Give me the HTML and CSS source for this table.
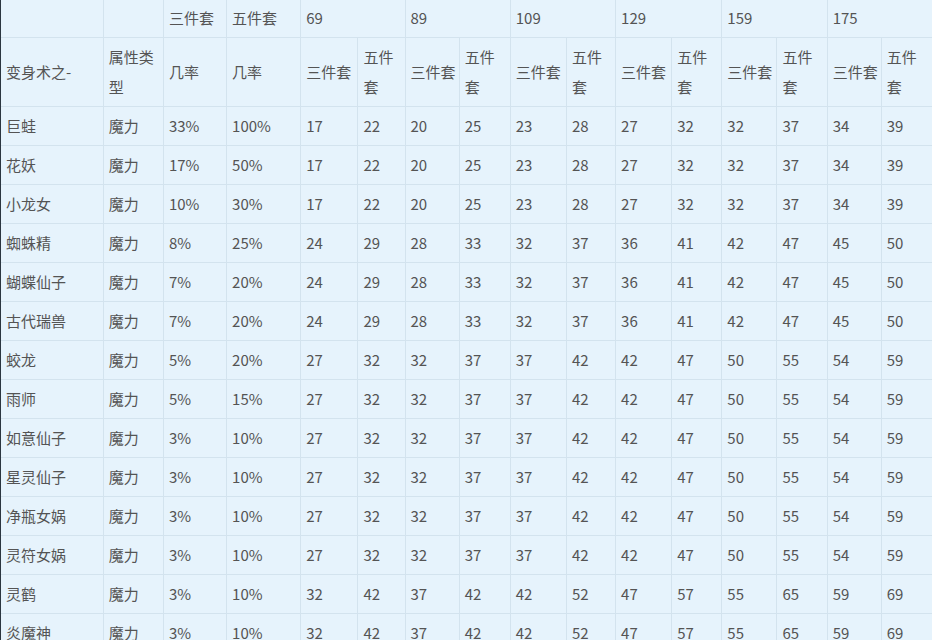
FILE: index.html
```html
<!DOCTYPE html>
<html lang="zh-CN">
<head>
<meta charset="utf-8">
<title>变身术</title>
<link rel="stylesheet" href="styles.css">
</head>
<body>
<div class="frame">
<table class="grid">
<colgroup>
<col class="w103"><col class="w60"><col class="w63"><col class="w74">
<col class="w57"><col class="w47"><col class="w54"><col class="w51">
<col class="w56"><col class="w49"><col class="w56"><col class="w50">
<col class="w55"><col class="w50"><col class="w54"><col class="w53">
</colgroup>
<thead>
<tr><td></td><td></td><td>三件套</td><td>五件套</td><td colspan="2">69</td><td colspan="2">89</td><td colspan="2">109</td><td colspan="2">129</td><td colspan="2">159</td><td colspan="2">175</td></tr>
<tr><td>变身术之-</td><td>属性类型</td><td>几率</td><td>几率</td><td>三件套</td><td class="wrap">五件套</td><td>三件套</td><td class="wrap">五件套</td><td>三件套</td><td class="wrap">五件套</td><td>三件套</td><td class="wrap">五件套</td><td>三件套</td><td class="wrap">五件套</td><td>三件套</td><td class="wrap">五件套</td></tr>
</thead>
<tbody>
<tr><td>巨蛙</td><td>魔力</td><td>33%</td><td>100%</td><td>17</td><td>22</td><td>20</td><td>25</td><td>23</td><td>28</td><td>27</td><td>32</td><td>32</td><td>37</td><td>34</td><td>39</td></tr>
<tr><td>花妖</td><td>魔力</td><td>17%</td><td>50%</td><td>17</td><td>22</td><td>20</td><td>25</td><td>23</td><td>28</td><td>27</td><td>32</td><td>32</td><td>37</td><td>34</td><td>39</td></tr>
<tr><td>小龙女</td><td>魔力</td><td>10%</td><td>30%</td><td>17</td><td>22</td><td>20</td><td>25</td><td>23</td><td>28</td><td>27</td><td>32</td><td>32</td><td>37</td><td>34</td><td>39</td></tr>
<tr><td>蜘蛛精</td><td>魔力</td><td>8%</td><td>25%</td><td>24</td><td>29</td><td>28</td><td>33</td><td>32</td><td>37</td><td>36</td><td>41</td><td>42</td><td>47</td><td>45</td><td>50</td></tr>
<tr><td>蝴蝶仙子</td><td>魔力</td><td>7%</td><td>20%</td><td>24</td><td>29</td><td>28</td><td>33</td><td>32</td><td>37</td><td>36</td><td>41</td><td>42</td><td>47</td><td>45</td><td>50</td></tr>
<tr><td>古代瑞兽</td><td>魔力</td><td>7%</td><td>20%</td><td>24</td><td>29</td><td>28</td><td>33</td><td>32</td><td>37</td><td>36</td><td>41</td><td>42</td><td>47</td><td>45</td><td>50</td></tr>
<tr><td>蛟龙</td><td>魔力</td><td>5%</td><td>20%</td><td>27</td><td>32</td><td>32</td><td>37</td><td>37</td><td>42</td><td>42</td><td>47</td><td>50</td><td>55</td><td>54</td><td>59</td></tr>
<tr><td>雨师</td><td>魔力</td><td>5%</td><td>15%</td><td>27</td><td>32</td><td>32</td><td>37</td><td>37</td><td>42</td><td>42</td><td>47</td><td>50</td><td>55</td><td>54</td><td>59</td></tr>
<tr><td>如意仙子</td><td>魔力</td><td>3%</td><td>10%</td><td>27</td><td>32</td><td>32</td><td>37</td><td>37</td><td>42</td><td>42</td><td>47</td><td>50</td><td>55</td><td>54</td><td>59</td></tr>
<tr><td>星灵仙子</td><td>魔力</td><td>3%</td><td>10%</td><td>27</td><td>32</td><td>32</td><td>37</td><td>37</td><td>42</td><td>42</td><td>47</td><td>50</td><td>55</td><td>54</td><td>59</td></tr>
<tr><td>净瓶女娲</td><td>魔力</td><td>3%</td><td>10%</td><td>27</td><td>32</td><td>32</td><td>37</td><td>37</td><td>42</td><td>42</td><td>47</td><td>50</td><td>55</td><td>54</td><td>59</td></tr>
<tr><td>灵符女娲</td><td>魔力</td><td>3%</td><td>10%</td><td>27</td><td>32</td><td>32</td><td>37</td><td>37</td><td>42</td><td>42</td><td>47</td><td>50</td><td>55</td><td>54</td><td>59</td></tr>
<tr><td>灵鹤</td><td>魔力</td><td>3%</td><td>10%</td><td>32</td><td>42</td><td>37</td><td>42</td><td>42</td><td>52</td><td>47</td><td>57</td><td>55</td><td>65</td><td>59</td><td>69</td></tr>
<tr><td>炎魔神</td><td>魔力</td><td>3%</td><td>10%</td><td>32</td><td>42</td><td>37</td><td>42</td><td>42</td><td>52</td><td>47</td><td>57</td><td>55</td><td>65</td><td>59</td><td>69</td></tr>
</tbody>
</table>
</div>
</body>
</html>
```
FILE: styles.css
```css
html, body {
  margin: 0;
  padding: 0;
  background: #e6f3fc;
  overflow: hidden;
}
.frame {
  width: 932px;
  height: 640px;
  overflow: hidden;
  border-left: 1px solid #2b3640;
  box-sizing: border-box;
}
.grid {
  margin-top: -2px;
  border-collapse: collapse;
  table-layout: fixed;
  width: 934px;
  font-family: "Noto Sans CJK SC", "Microsoft YaHei", sans-serif;
  font-size: 15px;
  line-height: 30px;
  color: #545454;
  background: #e6f3fc;
}
.grid td {
  border: 1px solid #d3e3ee;
  padding: 4px 1px 4px 5px;
  vertical-align: middle;
  text-align: left;
  overflow: hidden;
}
.grid td.wrap { padding-right: 9px; }
.grid tr td:first-child { border-left: none; }
.w103 { width: 102px; }
.w60 { width: 60px; }
.w63 { width: 63px; }
.w74 { width: 74px; }
.w57 { width: 57px; }
.w47 { width: 47px; }
.w54 { width: 54px; }
.w51 { width: 51px; }
.w56 { width: 56px; }
.w49 { width: 49px; }
.w50 { width: 50px; }
.w55 { width: 55px; }
.w53 { width: 53px; }
```
